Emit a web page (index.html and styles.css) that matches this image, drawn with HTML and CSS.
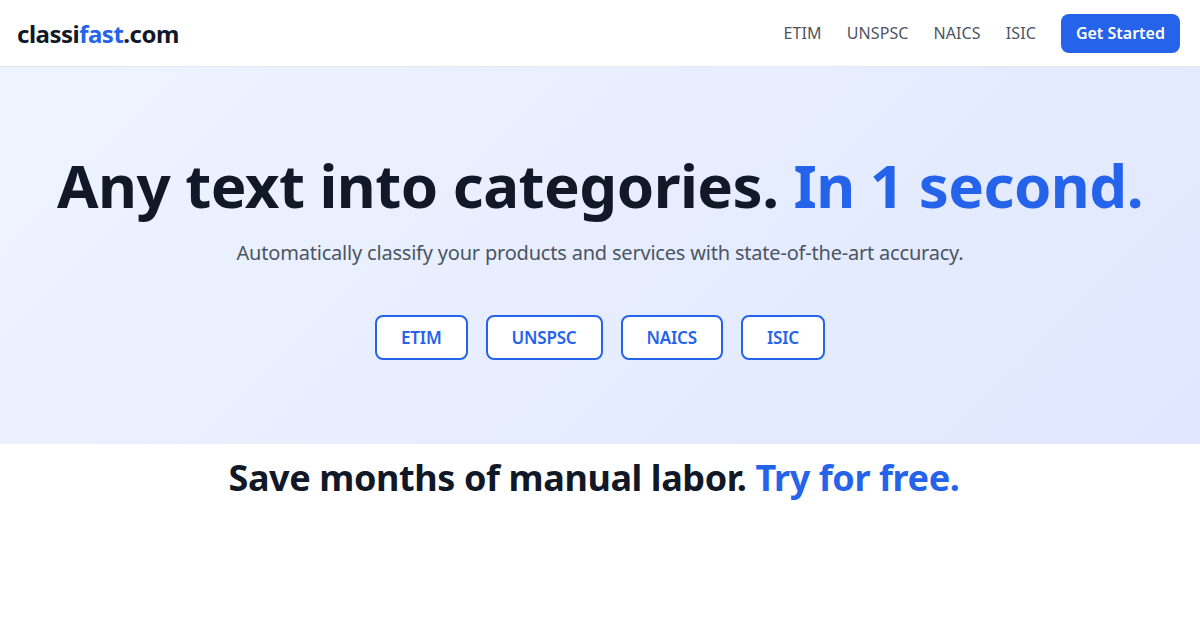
FILE: index.html
```html
<!DOCTYPE html>
<html lang="en">
<head>
<meta charset="utf-8">
<title>classifast.com</title>
<link rel="stylesheet" href="styles.css">
</head>
<body>
<header class="topbar">
  <a class="logo" href="#">classi<span class="accent">fast</span>.com</a>
  <nav class="nav">
    <a href="#">ETIM</a>
    <a href="#">UNSPSC</a>
    <a href="#">NAICS</a>
    <a href="#">ISIC</a>
    <a class="cta" href="#">Get Started</a>
  </nav>
</header>
<section class="hero">
  <h1>Any text into categories. <span class="accent">In 1 second.</span></h1>
  <p class="sub">Automatically classify your products and services with state-of-the-art accuracy.</p>
  <div class="chips">
    <a class="chip" href="#">ETIM</a>
    <a class="chip" href="#">UNSPSC</a>
    <a class="chip" href="#">NAICS</a>
    <a class="chip" href="#">ISIC</a>
  </div>
</section>
<section class="save">
  <h2>Save months of manual labor. <span class="accent">Try for free.</span></h2>
</section>
</body>
</html>
```

FILE: styles.css
```css
* { box-sizing: border-box; }
html, body { margin: 0; padding: 0; }
body {
  font-family: "Noto Sans", "Open Sans", sans-serif;
  color: #111827;
  background: #ffffff;
  width: 1200px;
  height: 630px;
  overflow: hidden;
}
a { text-decoration: none; }
.accent { color: #2563eb; }

.topbar {
  height: 67px;
  display: flex;
  align-items: center;
  justify-content: space-between;
  padding: 0 20px 0 17px;
  border-bottom: 1px solid #e5e7eb;
}
.logo {
  font-size: 24px;
  font-weight: 700;
  color: #111827;
  letter-spacing: -0.5px;
}
.nav {
  display: flex;
  align-items: center;
  gap: 25px;
}
.nav a {
  font-size: 16px;
  color: #4b5563;
  letter-spacing: 0.1px;
}
.nav a.cta {
  background: #2563eb;
  color: #ffffff;
  font-weight: 600;
  padding: 0 15px;
  height: 39px;
  line-height: 39px;
  border-radius: 8px;
  letter-spacing: 0;
}

.hero {
  height: 377px;
  background: linear-gradient(135deg, #eef4ff 0%, #e0e7ff 100%);
  display: flex;
  flex-direction: column;
  align-items: center;
  padding-top: 78px;
}
.hero h1 {
  margin: 0;
  font-size: 60px;
  font-weight: 700;
  line-height: 80px;
  letter-spacing: -0.55px;
}
.sub {
  margin: 14px 0 0;
  font-size: 20px;
  color: #4b5563;
  line-height: 28px;
  letter-spacing: -0.2px;
}
.chips {
  display: flex;
  gap: 18px;
  margin-top: 48px;
}
.chip {
  height: 45px;
  padding: 0 24px;
  display: flex;
  align-items: center;
  border: 2px solid #2563eb;
  border-radius: 8px;
  background: #ffffff;
  color: #2563eb;
  font-size: 17px;
  font-weight: 600;
  letter-spacing: -0.2px;
}

.save {
  display: flex;
  justify-content: center;
  padding: 12px 12px 0 0;
}
.save h2 {
  margin: 0;
  font-size: 36px;
  font-weight: 700;
  line-height: 44px;
  letter-spacing: -0.4px;
}
```
